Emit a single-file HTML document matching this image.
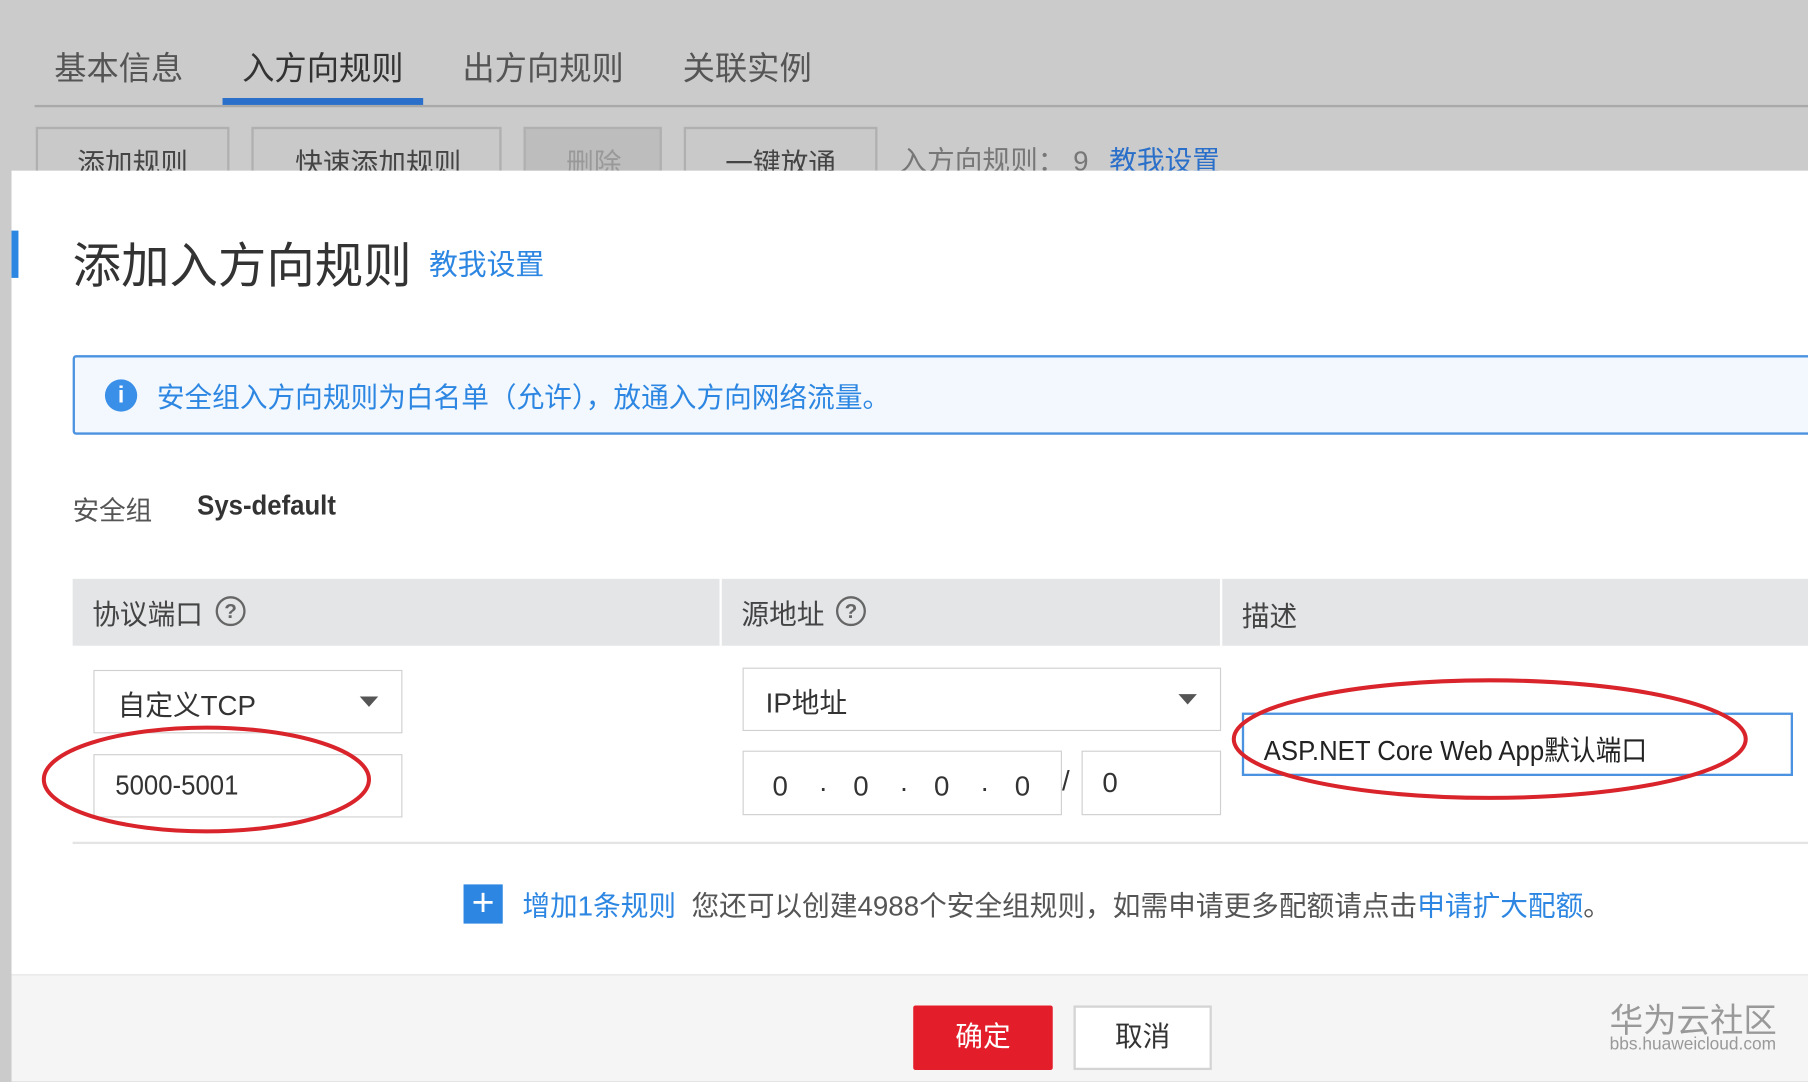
<!DOCTYPE html>
<html><head><meta charset="utf-8"><style>
*{margin:0;padding:0;box-sizing:border-box}
html,body{width:1808px;height:1082px;overflow:hidden;background:#ccc}
#s{position:absolute;left:0;top:0;width:1568px;height:938px;transform:scale(1.15306);transform-origin:0 0;font-family:"Liberation Sans","Noto Sans CJK SC",sans-serif;background:#cbcbcb}
.a{position:absolute;white-space:nowrap}
.blue{color:#2d87e2}
.box{position:absolute;border:1px solid #d0d0d0;background:#fff}
.tri{position:absolute;width:0;height:0;border-left:8px solid transparent;border-right:8px solid transparent;border-top:9px solid #555}
.q{position:absolute;width:26px;height:26px;border:2px solid #666;border-radius:50%;font-size:18px;line-height:22px;text-align:center;color:#666;font-weight:bold}
.n{display:inline-block;transform:scaleX(0.93);transform-origin:0 0}
</style></head><body><div id="s">
<div class="a" style="left:0;top:0;width:1568px;height:148px;background:#cbcbcb"></div>
<div class="a" style="left:47px;top:38px;font-size:28px;color:#555">基本信息</div>
<div class="a" style="left:210px;top:38px;font-size:28px;color:#333">入方向规则</div>
<div class="a" style="left:401px;top:38px;font-size:28px;color:#555">出方向规则</div>
<div class="a" style="left:592px;top:38px;font-size:28px;color:#555">关联实例</div>
<div class="a" style="left:30px;top:91px;width:1538px;height:2px;background:#a9a9a9"></div>
<div class="a" style="left:193px;top:85px;width:174px;height:6px;background:#2a6fc9"></div>
<div class="a" style="left:31px;top:110px;width:168px;height:50px;border:2px solid #b0b0b0;background:#c9c9c9;font-size:24px;color:#444;padding:10px 0 0 34px">添加规则</div>
<div class="a" style="left:218px;top:110px;width:217px;height:50px;border:2px solid #b0b0b0;background:#c9c9c9;font-size:24px;color:#444;padding:10px 0 0 36px">快速添加规则</div>
<div class="a" style="left:454px;top:110px;width:120px;height:50px;border:2px solid #b0b0b0;background:#bdbdbd;font-size:24px;color:#999;padding:10px 0 0 35px">删除</div>
<div class="a" style="left:593px;top:110px;width:168px;height:50px;border:2px solid #b0b0b0;background:#c9c9c9;font-size:24px;color:#444;padding:10px 0 0 34px">一键放通</div>
<div class="a" style="left:780px;top:120px;font-size:24px;color:#777">入方向规则： 9</div>
<div class="a" style="left:962px;top:120px;font-size:24px;color:#2a6fc9">教我设置</div>

<div class="a" style="left:10px;top:148px;width:1558px;height:697px;background:#fff"></div>
<div class="a" style="left:10px;top:845px;width:1558px;height:93px;background:#f5f5f5;border-top:1px solid #e8e8e8"></div>
<div class="a" style="left:10px;top:200px;width:6px;height:41px;background:#2d87e2"></div>
<div class="a" style="left:63px;top:197px;font-size:42px;color:#333">添加入方向规则</div>
<div class="a blue" style="left:372px;top:210px;font-size:25px">教我设置</div>

<div class="a" style="left:63px;top:308px;width:1520px;height:69px;border:2px solid #4b92e0;background:#f3f8fe;border-radius:3px"></div>
<div class="a" style="left:91px;top:329px;width:28px;height:28px;border-radius:50%;background:#3a8fe8;color:#fff;font-size:20px;line-height:28px;text-align:center;font-weight:bold">i</div>
<div class="a blue" style="left:136px;top:325px;font-size:24px">安全组入方向规则为白名单（允许），放通入方向网络流量。</div>

<div class="a" style="left:63px;top:424px;font-size:23px;color:#555">安全组</div>
<div class="a" style="left:171px;top:425px;font-size:24px;color:#333;font-weight:bold"><span class="n">Sys-default</span></div>

<div class="a" style="left:63px;top:502px;width:1505px;height:58px;background:#e3e5e7"></div>
<div class="a" style="left:624px;top:502px;width:2px;height:58px;background:#fff"></div>
<div class="a" style="left:1058px;top:502px;width:2px;height:58px;background:#fff"></div>
<div class="a" style="left:80px;top:513px;font-size:24px;color:#444">协议端口</div>
<div class="q" style="left:187px;top:517px">?</div>
<div class="a" style="left:643px;top:513px;font-size:24px;color:#444">源地址</div>
<div class="q" style="left:725px;top:517px">?</div>
<div class="a" style="left:1077px;top:515px;font-size:24px;color:#444">描述</div>

<div class="box" style="left:81px;top:581px;width:268px;height:55px"></div>
<div class="a" style="left:102px;top:592px;font-size:24px;color:#333">自定义TCP</div>
<div class="tri" style="left:312px;top:604px"></div>
<div class="box" style="left:81px;top:654px;width:268px;height:55px"></div>
<div class="a" style="left:100px;top:668px;font-size:24px;color:#333"><span class="n">5000-5001</span></div>

<div class="box" style="left:644px;top:579px;width:415px;height:55px"></div>
<div class="a" style="left:664px;top:590px;font-size:24px;color:#333">IP地址</div>
<div class="tri" style="left:1022px;top:602px"></div>
<div class="box" style="left:644px;top:651px;width:277px;height:56px"></div>
<div class="a" style="left:670px;top:669px;font-size:24px;color:#333">0</div>
<div class="a" style="left:740px;top:669px;font-size:24px;color:#333">0</div>
<div class="a" style="left:810px;top:669px;font-size:24px;color:#333">0</div>
<div class="a" style="left:880px;top:669px;font-size:24px;color:#333">0</div>
<div class="a" style="left:710px;top:670px;font-size:24px;color:#333">·</div>
<div class="a" style="left:780px;top:670px;font-size:24px;color:#333">·</div>
<div class="a" style="left:850px;top:670px;font-size:24px;color:#333">·</div>
<div class="a" style="left:921px;top:664px;font-size:24px;color:#333">/</div>
<div class="box" style="left:938px;top:651px;width:121px;height:56px"></div>
<div class="a" style="left:956px;top:666px;font-size:24px;color:#333">0</div>

<div class="a" style="left:1077px;top:618px;width:478px;height:55px;border:2px solid #4b92e0;background:#fff"></div>
<div class="a" style="left:1096px;top:631px;font-size:24px;color:#222"><span class="n">ASP.NET Core Web App默认端口</span></div>

<div class="a" style="left:63px;top:730px;width:1505px;height:2px;background:#e4e4e4"></div>
<div class="a" style="left:402px;top:767px;width:34px;height:34px;background:#2d87e2;color:#fff;font-size:34px;line-height:32px;text-align:center">+</div>
<div class="a" style="left:453px;top:766px;font-size:24px"><span class="blue">增加1条规则</span> <span style="color:#555">&nbsp;您还可以创建4988个安全组规则，如需申请更多配额请点击</span><span class="blue">申请扩大配额</span><span style="color:#555">。</span></div>

<div class="a" style="left:792px;top:872px;width:121px;height:56px;background:#e31e2a;color:#fff;font-size:24px;text-align:center;line-height:56px;border-radius:2px">确定</div>
<div class="a" style="left:931px;top:872px;width:120px;height:56px;background:#fff;border:2px solid #d4d4d4;color:#333;font-size:24px;text-align:center;line-height:52px">取消</div>
<div class="a" style="left:1396px;top:862px;font-size:29px;color:#999">华为云社区</div>
<div class="a" style="left:1396px;top:897px;font-size:15px;color:#999">bbs.huaweicloud.com</div>

<svg class="a" style="left:0;top:0" width="1568" height="938">
<ellipse cx="179" cy="676" rx="141" ry="45" fill="none" stroke="#d9242b" stroke-width="3.5"/>
<ellipse cx="1292" cy="641" rx="222" ry="51" fill="none" stroke="#d9242b" stroke-width="3.5"/>
</svg>
</div></body></html>
